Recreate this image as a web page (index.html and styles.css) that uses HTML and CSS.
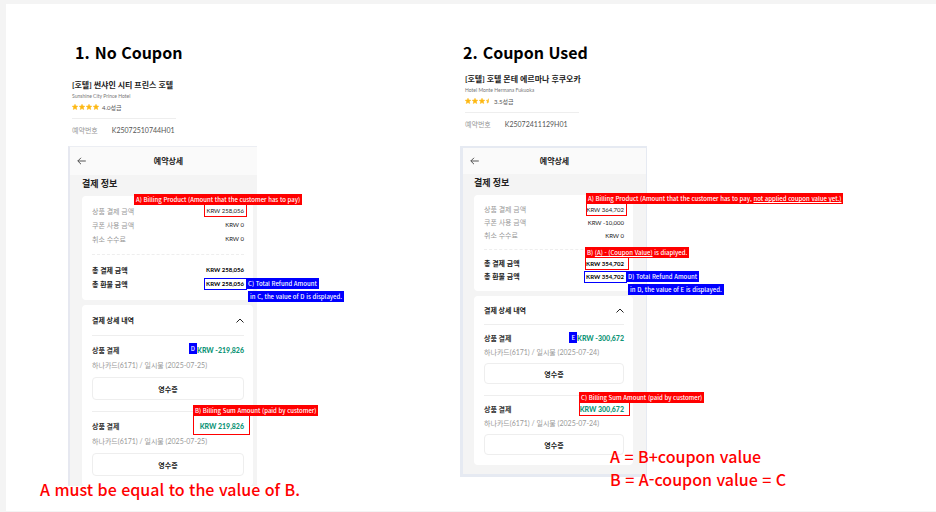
FILE: index.html
```html
<!DOCTYPE html>
<html lang="ko">
<head>
    <meta charset="UTF-8">
    <meta name="viewport" content="width=device-width, initial-scale=1.0">
    <title>Coupon billing guide</title>
    <link rel="stylesheet" href="styles.css">
</head>
<body>
    <svg width="0" height="0" class="defs" aria-hidden="true">
        <symbol id="star" viewBox="0 0 12 12">
            <path d="M6 .4l1.7 3.6 3.9.5-2.9 2.7.8 3.9L6 9.2l-3.5 1.9.8-3.9L.4 4.500l3.900-.5z" fill="#fdb813" stroke="#fdb813" stroke-linejoin="round"/>
        </symbol>
        <symbol id="half-star" viewBox="0 0 12 12">
            <path d="M6 .4v8.800l-3.500 1.900.8-3.900L.4 4.500l3.900-.5z" fill="#fdb813" stroke="#fdb813" stroke-linejoin="round"/>
        </symbol>
    </svg>

    <main class="board">
        <section class="case case-plain">
            <h1><span>1.</span> <span>No Coupon</span></h1>
            <div class="hotel">
                <h2>[호텔] 썬샤인 시티 프린스 호텔</h2>
                <p class="hotel-en">Sunshine City Prince Hotel</p>
                <div class="stars">
                    <svg><use href="#star"/></svg>
                    <svg><use href="#star"/></svg>
                    <svg><use href="#star"/></svg>
                    <svg><use href="#star"/></svg>
                    <span>4.0성급</span>
                </div>
                <div class="booking"><span>예약번호</span><b>K25072510744H01</b></div>
            </div>

            <div class="phone">
                <header>
                    <button class="back" aria-label="뒤로">
                        <svg viewBox="0 0 9 8"><path d="M4 .8L.8 4 4 7.200M.8 4h8"/></svg>
                    </button>
                    예약상세
                </header>
                <h3>결제 정보</h3>
                <dl class="card summary">
                    <div class="row">
                        <dt>상품 결제 금액</dt>
                        <dd>KRW 258,056<span class="box box-a"><span class="tag above">A) Billing Product (Amount that the customer has to pay)</span></span></dd>
                    </div>
                    <div class="row"><dt>쿠폰 사용 금액</dt><dd>KRW 0</dd></div>
                    <div class="row"><dt>취소 수수료</dt><dd>KRW 0</dd></div>
                    <div class="row total first"><dt>총 결제 금액</dt><dd>KRW 258,056</dd></div>
                    <div class="row total">
                        <dt>총 환불 금액</dt>
                        <dd>KRW 258,056<span class="box box-refund"><span class="tag beside">C) Total Refund Amount</span><span class="tag below">in C, the value of D is displayed.</span></span></dd>
                    </div>
                </dl>
                <div class="card detail">
                    <button class="toggle">결제 상세 내역
                        <svg viewBox="0 0 8 5"><path d="M.5 4.500L4 1l3.500 3.500"/></svg>
                    </button>
                    <div class="pay">
                        <div class="row"><span>상품 결제</span><b><span class="tag badge">D</span>KRW -219,826</b></div>
                        <p>하나카드(6171) / 일시불 (2025-07-25)</p>
                        <button class="receipt">영수증</button>
                    </div>
                    <div class="pay">
                        <div class="row"><span>상품 결제</span><b>KRW 219,826<span class="box box-sum"><span class="tag above">B) Billing Sum Amount (paid by customer)</span></span></b></div>
                        <p>하나카드(6171) / 일시불 (2025-07-25)</p>
                        <button class="receipt">영수증</button>
                    </div>
                </div>
            </div>
            <p class="note">A must be equal to the value of B.</p>
        </section>

        <section class="case case-coupon">
            <h1><span>2.</span> <span>Coupon Used</span></h1>
            <div class="hotel">
                <h2>[호텔] 호텔 몬테 에르마나 후쿠오카</h2>
                <p class="hotel-en">Hotel Monte Hermana Fukuoka</p>
                <div class="stars">
                    <svg><use href="#star"/></svg>
                    <svg><use href="#star"/></svg>
                    <svg><use href="#star"/></svg>
                    <svg class="half"><use href="#half-star"/></svg>
                    <span>3.5성급</span>
                </div>
                <div class="booking"><span>예약번호</span><b>K25072411129H01</b></div>
            </div>

            <div class="phone">
                <header>
                    <button class="back" aria-label="뒤로">
                        <svg viewBox="0 0 9 8"><path d="M4 .8L.8 4 4 7.200M.8 4h8"/></svg>
                    </button>
                    예약상세
                </header>
                <h3>결제 정보</h3>
                <dl class="card summary">
                    <div class="row">
                        <dt>상품 결제 금액</dt>
                        <dd>KRW 364,702<span class="box box-a"><span class="tag above">A) Billing Product (Amount that the customer has to pay, <u>not applied coupon value yet.)</u></span></span></dd>
                    </div>
                    <div class="row"><dt>쿠폰 사용 금액</dt><dd>KRW -10,000</dd></div>
                    <div class="row"><dt>취소 수수료</dt><dd>KRW 0</dd></div>
                    <div class="row total first">
                        <dt>총 결제 금액</dt>
                        <dd>KRW 354,702<span class="box box-b"><span class="tag above">B) <u>(A) - (Coupon Value)</u> is diaplyed.</span></span></dd>
                    </div>
                    <div class="row total">
                        <dt>총 환불 금액</dt>
                        <dd>KRW 354,702<span class="box box-refund"><span class="tag beside">D) Total Refund Amount</span><span class="tag below">in D, the value of E is displayed.</span></span></dd>
                    </div>
                </dl>
                <div class="card detail">
                    <button class="toggle">결제 상세 내역
                        <svg viewBox="0 0 8 5"><path d="M.5 4.500L4 1l3.500 3.500"/></svg>
                    </button>
                    <div class="pay">
                        <div class="row"><span>상품 결제</span><b><span class="tag badge">E</span>KRW -300,672</b></div>
                        <p>하나카드(6171) / 일시불 (2025-07-24)</p>
                        <button class="receipt">영수증</button>
                    </div>
                    <div class="pay">
                        <div class="row"><span>상품 결제</span><b>KRW 300,672<span class="box box-sum"><span class="tag above">C) Billing Sum Amount (paid by customer)</span></span></b></div>
                        <p>하나카드(6171) / 일시불 (2025-07-24)</p>
                        <button class="receipt">영수증</button>
                    </div>
                </div>
            </div>
            <p class="note">A = B+coupon value<br>B = A-coupon value = C</p>
        </section>
    </main>
</body>
</html>
```
FILE: styles.css
```css
* {
    box-sizing: border-box;
}

body {
    margin: 0;
    background-color: #f4f4f4;
    font-family: Lato, "Noto Sans CJK KR", sans-serif;
    font-size: 7px;
    color: #222;
}

h1, h2, h3, p, dl, dd {
    margin: 0;
}

button {
    padding: 0;
    border: none;
    background: none;
    font: inherit;
    color: inherit;
    cursor: pointer;
}

svg {
    fill: none;
    stroke: #222;
    display: block;
}

.defs {
    position: absolute;
}

.board {
    display: grid;
    grid-template-columns: 14fr 17fr;
    margin: 4px 0 1px 6px;
    padding: 36px 0 0 62px;
    min-height: calc(100vh - 5px);
    background-color: white;
}

.case {
    position: relative;
    --row: 14px;
    --gap: 8px;
    --head: 28px;
    --title: 30px;
    --sub: 16px;
    --button: 23px;
}

.case-coupon {
    --row: 13px;
    --gap: 7px;
    --head: 26px;
    --title: 28px;
    --sub: 14px;
    --button: 21px;
}

h1 {
    display: flex;
    gap: 5px;
    padding-left: 7px;
    font-family: "Noto Sans CJK KR", sans-serif;
    font-size: 16px;
    line-height: 24px;
    font-weight: bold;
    color: black;
}

.case-coupon h1 {
    padding-left: 3px;
}

/* Отель */
.hotel {
    width: 108px;
    margin: 15px 0 10px;
    padding-left: 4px;
}

.case-coupon .hotel {
    width: 119px;
    margin: 9px 0 16px;
    padding-left: 5px;
}

.hotel h2 {
    font-size: 8px;
    line-height: 12px;
    white-space: nowrap;
}

.hotel-en {
    font-size: 5px;
    line-height: 10px;
    color: #777;
    white-space: nowrap;
}

.stars {
    display: flex;
    align-items: center;
    gap: 1px;
    height: 12px;
    font-size: 6px;
    color: #555;
}

.stars svg {
    width: 6px;
    height: 6px;
}

.stars .half {
    width: 5px;
}

.stars span {
    margin-left: 2px;
}

.booking {
    display: flex;
    gap: 14px;
    margin-top: 5px;
    padding-top: 5px;
    border-top: 1px solid #eee;
    line-height: 12px;
    color: #999;
    white-space: nowrap;
}

.booking b {
    font-weight: normal;
    color: #555;
}

/* Экран телефона */
.phone {
    width: 189px;
    padding: 0 4px 0 12px;
    border-top: 1px solid #eceef3;
    border-left: 2px solid #e6e8f0;
    background-color: #f4f4f4;
}

.case-coupon .phone {
    width: 187px;
    padding: 0 13px 9px 11px;
    border: solid #e6eaf2;
    border-width: 2px 1px 3px 3px;
}

.phone header {
    position: relative;
    height: var(--head);
    margin: 0 -4px 0 -12px;
    padding-left: 10px;
    background-color: #fafafa;
    text-align: center;
    font-size: 8px;
    line-height: var(--head);
    font-weight: bold;
}

.case-coupon header {
    margin: 0 -13px 0 -11px;
    padding-left: 0;
}

.back {
    position: absolute;
    left: 7px;
    top: 50%;
    transform: translateY(-50%);
}

.back svg {
    width: 9px;
    height: 8px;
    stroke: #555;
}

h3 {
    margin-bottom: 3px;
    font-size: 9px;
    line-height: 18px;
}

.card {
    padding: 8px 9px 9px 10px;
    border-radius: 4px;
    background-color: white;
}

.case-coupon .card {
    padding-bottom: 8px;
}

.row {
    display: flex;
    justify-content: space-between;
    line-height: var(--row);
    white-space: nowrap;
}

.row dt {
    color: #999;
}

.row dd,
.row b {
    position: relative;
}

.row dd {
    font-size: 6px;
}

.total,
.total dt {
    font-weight: bold;
    color: #222;
}

.total dd {
    color: black;
}

.first {
    margin-top: var(--gap);
    padding-top: var(--gap);
    border-top: 1px dashed #eee;
}

.card.detail {
    margin-top: 5px;
    padding-top: 0;
    padding-bottom: 10px;
}

.toggle {
    display: flex;
    justify-content: space-between;
    align-items: center;
    width: 100%;
    height: var(--title);
    font-weight: bold;
}

.toggle svg {
    width: 8px;
    height: 5px;
}

.pay {
    padding-top: 7px;
    border-top: 1px solid #eee;
}

.pay + .pay {
    margin-top: 11px;
}

.pay .row {
    font-weight: bold;
    color: #333;
}

.pay b {
    color: #0f9577;
}

.pay p {
    line-height: var(--sub);
    color: #999;
    white-space: nowrap;
}

.receipt {
    display: block;
    width: 100%;
    height: var(--button);
    margin-top: 4px;
    border: 1px solid #eee;
    border-radius: 4px;
    font-weight: bold;
}

/* Пометки поверх экрана */
.box {
    position: absolute;
    border: 1px solid red;
}

.box-a {
    top: 0;
    right: -3px;
    width: 43px;
    height: 13px;
}

.case-coupon .box-a {
    width: 41px;
}

.box-b {
    top: 0;
    right: -5px;
    width: 44px;
    height: 13px;
}

.box-refund {
    top: 1px;
    right: -3px;
    width: 43px;
    height: 12px;
    border-color: blue;
}

.box-sum {
    top: -4px;
    right: -6px;
    width: 57px;
    height: 20px;
}

.case-coupon .box-sum {
    top: -1px;
    width: 51px;
    height: 14px;
}

.tag {
    position: absolute;
    z-index: 1;
    padding: 0 2px;
    background-color: red;
    font-family: "Noto Sans CJK KR", sans-serif;
    font-size: 6px;
    line-height: 11px;
    font-weight: 500;
    color: white;
    white-space: nowrap;
}

.above {
    left: -1px;
    bottom: 100%;
}

.case-plain .box-a .above {
    left: -71px;
}

.beside,
.below,
.badge {
    background-color: blue;
}

.beside {
    left: 100%;
    top: -1px;
}

.below {
    left: calc(100% + 2px);
    top: 12px;
}

.badge {
    right: 100%;
    top: 0;
}

.note {
    position: absolute;
    z-index: 2;
    left: -28px;
    top: 438px;
    font-family: "Noto Sans CJK KR", sans-serif;
    font-size: 16px;
    line-height: 23px;
    font-weight: 500;
    color: red;
    white-space: nowrap;
}

.case-coupon .note {
    left: 150px;
    top: 405px;
}
```
